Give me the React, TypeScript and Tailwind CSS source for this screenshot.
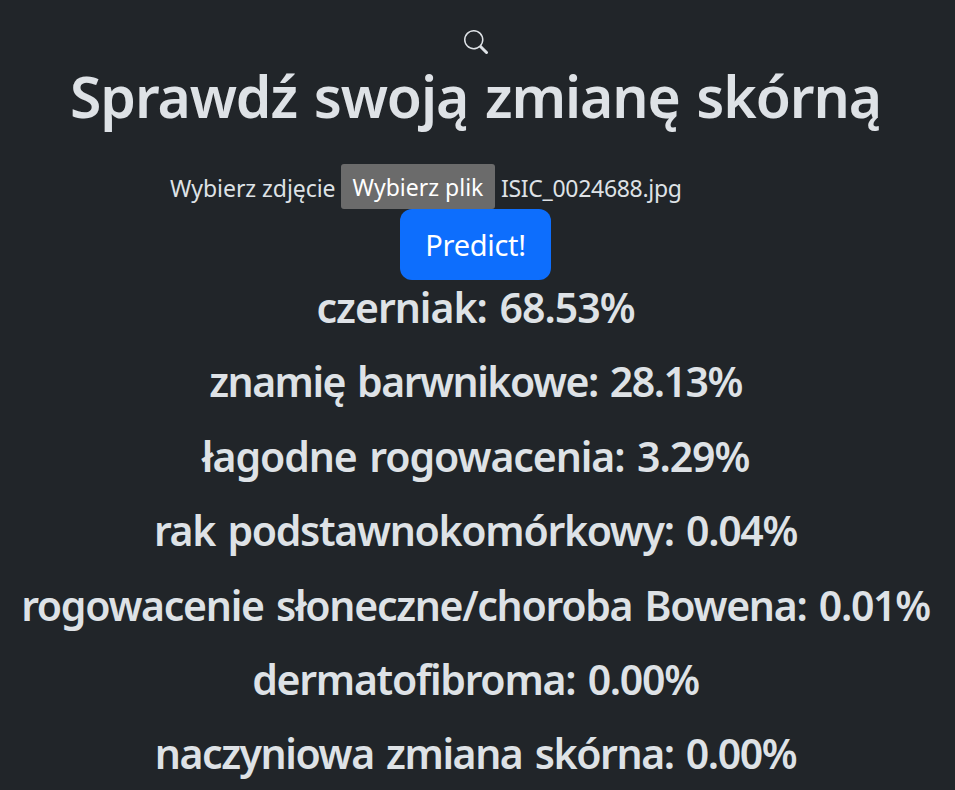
import { BsSearch } from "react-icons/bs";

const results = [
  { text: "czerniak: 68.53%", cls: "tracking-[-1px]" },
  { text: "znamię barwnikowe: 28.13%", cls: "tracking-[-1.5px]" },
  { text: "łagodne rogowacenia: 3.29%", cls: "tracking-[-1.08px]" },
  { text: "rak podstawnokomórkowy: 0.04%", cls: "tracking-[-1.31px]" },
  { text: "rogowacenie słoneczne/choroba Bowena: 0.01%", cls: "tracking-[-1.3px]" },
  { text: "dermatofibroma: 0.00%", cls: "tracking-[-1.27px]" },
  { text: "naczyniowa zmiana skórna: 0.00%", cls: "tracking-[-1.42px]" },
];

export default function App() {
  return (
    <main className="flex h-[790px] w-[955px] flex-col items-center overflow-hidden bg-[#212529] pr-1 font-['Noto_Sans','Open_Sans',sans-serif] text-[#dee2e6]">
      <BsSearch className="mt-[30px] h-6 w-6 shrink-0" />
      <h1 className="mt-[7px] h-[103px] shrink-0 text-[57px] leading-[71px] font-semibold tracking-[-1.1px] whitespace-nowrap [word-spacing:3px]">Sprawdź swoją zmianę skórną</h1>
      <div className="-ml-[100px] flex h-[45px] shrink-0 items-center gap-[6px] text-[23px] whitespace-nowrap">
        <label className="w-[165px] pt-[3px] tracking-[-0.05px]">Wybierz zdjęcie</label>
        <button className="h-[45px] w-[154px] rounded-[3px] bg-[#6b6b6b] pt-[2px] text-white">Wybierz plik</button>
        <span className="w-[180px] pt-[3px] tracking-[-0.3px]">ISIC_0024688.jpg</span>
      </div>
      <button className="h-[71px] w-[151px] shrink-0 rounded-[12px] bg-[#0d6efd] text-[29px] tracking-[-0.3px] text-white">Predict!</button>
      {results.map((r) => (
        <h2 key={r.text} className={`h-[74.4px] shrink-0 text-[41px] leading-[54px] font-semibold whitespace-nowrap [word-spacing:3px] ${r.cls}`}>{r.text}</h2>
      ))}
    </main>
  );
}
